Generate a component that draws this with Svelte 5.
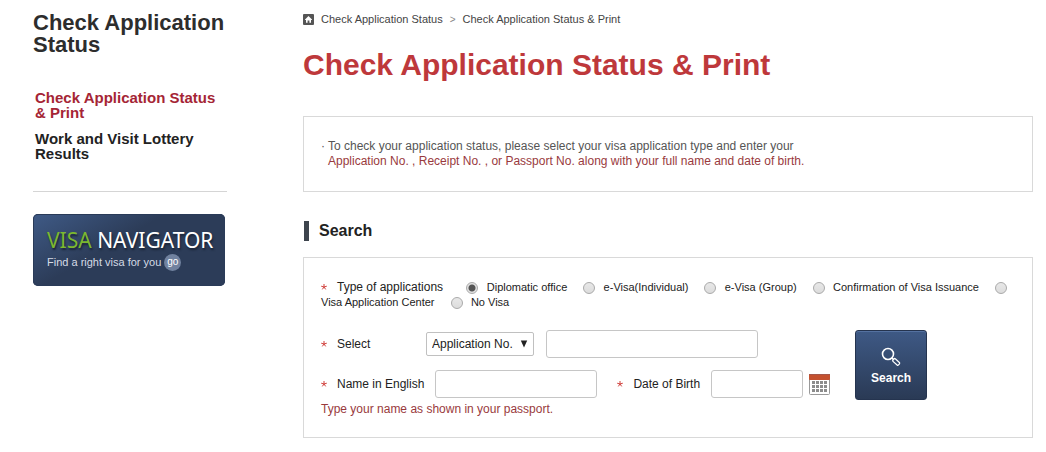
<script lang="ts">
const types = [
    { id: 'diplomatic', label: 'Diplomatic office' },
    { id: 'individual', label: 'e-Visa(Individual)' },
    { id: 'group', label: 'e-Visa (Group)' },
    { id: 'issuance', label: 'Confirmation of Visa Issuance' },
    { id: 'center', label: 'Visa Application Center' },
    { id: 'novisa', label: 'No Visa' }
]

let visaType = $state('diplomatic')
let searchBy = $state('Application No.')
let number = $state('')
let name = $state('')
let birth = $state('')

function onsubmit(e: SubmitEvent) {
    e.preventDefault()
}
</script>

{#snippet star()}
    <svg class="star" width="6" height="6" viewBox="0 0 6 6" role="img" aria-label="required">
        <path d="M3 0 V3 M0.2 2.2 L3 3 L5.8 2.2 M1.3 5.4 L3 3 L4.7 5.4" fill="none" stroke="#d0413d" />
    </svg>
{/snippet}

<div class="page">
    <aside>
        <h2>Check Application Status</h2>
        <nav>
            <a class="current" href="#status">Check Application Status &amp; Print</a>
            <a href="#lottery">Work and Visit Lottery Results</a>
        </nav>
        <a class="banner" href="#navigator">
            <span class="banner-title"><em>VISA</em> NAVIGATOR</span>
            <span class="banner-text">Find a right visa for you <span class="go">go</span></span>
        </a>
    </aside>

    <main>
        <div class="breadcrumb">
            <a href="#home" aria-label="Home">
                <svg width="11" height="11" viewBox="0 0 11 11">
                    <rect width="11" height="11" rx="1" fill="#555" />
                    <path d="M5.5 2 L9 5.4 V6 H8 V8.8 H6.4 V6.6 H4.6 V8.8 H3 V6 H2 V5.4 Z" fill="#fff" />
                </svg>
            </a>
            <a href="#status">Check Application Status</a>
            <span class="sep">&gt;</span>
            <span>Check Application Status &amp; Print</span>
        </div>
        <h1>Check Application Status &amp; Print</h1>

        <div class="box info">
            <span class="dot">·</span>
            <p>
                To check your application status, please select your visa application type and enter your<br />
                <span class="red">Application No. , Receipt No. , or Passport No. along with your full name and date of birth.</span>
            </p>
        </div>

        <h3>Search</h3>

        <form class="box" {onsubmit}>
            <div class="types" role="radiogroup" aria-labelledby="types-label">
                {@render star()}<span class="types-label" id="types-label">Type of applications</span>
                {#each types as type}
                    <input type="radio" id={type.id} value={type.id} bind:group={visaType} />
                    <label for={type.id}>{type.label}</label>
                {/each}
            </div>

            <div class="fields">
                <div class="rows">
                    <div class="row">
                        {@render star()}
                        <label class="select-label" for="search-by">Select</label>
                        <div class="select">
                            <select id="search-by" bind:value={searchBy}>
                                <option>Application No.</option>
                                <option>Receipt No.</option>
                                <option>Passport No.</option>
                            </select>
                            <svg width="8" height="8" viewBox="0 0 8 8"><path d="M0.8 0.5 H7.2 L4 7.5 Z" fill="#222" /></svg>
                        </div>
                        <input class="number" type="text" aria-label="Number" bind:value={number} />
                    </div>
                    <div class="row">
                        {@render star()}
                        <label for="name">Name in English</label>
                        <input class="name" id="name" type="text" bind:value={name} />
                        <span class="second">{@render star()}</span>
                        <label for="birth">Date of Birth</label>
                        <input class="birth" id="birth" type="text" bind:value={birth} />
                        <button class="calendar" type="button" aria-label="Open calendar">
                            <svg width="21" height="21" viewBox="0 0 21 21">
                                <rect x="0.5" y="0.5" width="20" height="20" rx="1" fill="#fff" stroke="#999" />
                                <rect x="0" y="0" width="21" height="6" rx="1" fill="#c4512f" />
                                <rect x="0" y="0" width="21" height="1" fill="#a5574a" />
                                {#each [7, 11, 15] as y}
                                    {#each [3, 7, 11, 15] as x}
                                        <rect {x} {y} width="3" height="3" fill="#8c8c8c" />
                                    {/each}
                                {/each}
                            </svg>
                        </button>
                    </div>
                </div>
                <button class="search" type="submit">
                    <svg width="20" height="20" viewBox="0 0 20 20" fill="none" stroke="#fff">
                        <circle cx="7" cy="7" r="5.5" stroke-width="1.6" />
                        <path d="M10.8 10.8 L13 13" stroke-width="1.6" />
                        <rect x="0" y="-1.7" width="7.5" height="3.4" rx="1" transform="translate(12.4 12.4) rotate(42)" stroke-width="1.2" />
                    </svg>
                    Search
                </button>
            </div>
            <p class="hint">Type your name as shown in your passport.</p>
        </form>
    </main>
</div>

<style>
    :global(body) {
        background: #fff;
    }
    .page {
        display: flex;
        gap: 76px;
        padding: 12px 13px 14px 33px;
        font-family: Arial, "Liberation Sans", sans-serif;
        font-size: 12px;
        line-height: 15px;
        color: #222;
    }
    a {
        color: inherit;
        text-decoration: none;
    }
    h1, h2, h3, p {
        margin: 0;
    }
    aside {
        flex: 0 0 194px;
    }
    main {
        flex: 1;
    }
    h2 {
        font-size: 22px;
        line-height: 22px;
        color: #2d2d2d;
    }
    nav {
        display: flex;
        flex-direction: column;
        gap: 11px;
        margin-top: 34px;
        padding: 0 0 30px 2px;
        border-bottom: 1px solid #d5d5d5;
        font-size: 15px;
        font-weight: bold;
    }
    .current {
        color: #a52535;
    }
    .banner {
        display: flex;
        flex-direction: column;
        box-sizing: border-box;
        width: 192px;
        height: 72px;
        margin-top: 22px;
        padding: 13px 0 0 14px;
        border-radius: 5px;
        background: linear-gradient(150deg, #3f5a86 0%, #2c3c58 42%);
        box-shadow: inset 0 0 0 1px #2a3b58;
        color: #fff;
    }
    .banner-title {
        font-family: "Noto Sans", "Open Sans", sans-serif;
        font-size: 21px;
        line-height: 26px;
        text-shadow: 1px 2px 2px #1a2436;
        white-space: nowrap;
    }
    em {
        font-style: normal;
        color: #7cb82f;
    }
    .banner-text {
        display: flex;
        align-items: center;
        gap: 3px;
        font-size: 11px;
        line-height: 18px;
        color: #d5dbe6;
    }
    .go {
        width: 17px;
        height: 17px;
        border-radius: 50%;
        background: #71829f;
        font-size: 10px;
        line-height: 15px;
        text-align: center;
        color: #fff;
    }
    .breadcrumb {
        display: flex;
        align-items: center;
        gap: 7px;
        font-size: 11px;
        color: #444;
    }
    .breadcrumb svg {
        display: block;
    }
    .sep {
        font-size: 10px;
        color: #888;
    }
    h1 {
        margin-top: 20px;
        font-size: 30px;
        line-height: 36px;
        color: #be383b;
    }
    .box {
        border: 1px solid #d9d9d9;
        padding: 22px 13px 20px 17px;
    }
    .info {
        display: flex;
        gap: 3px;
        margin-top: 33px;
        padding-bottom: 22px;
        color: #555;
    }
    .red, .hint {
        color: #993a3d;
    }
    h3 {
        margin: 29px 0 16px 1px;
        padding-left: 10px;
        border-left: 5px solid #3d444d;
        font-size: 16px;
        line-height: 20px;
    }
    .star {
        flex: none;
        margin: 0 10px 1px 0;
    }
    .types label {
        margin-right: 16px;
        font-size: 11px;
    }
    .types-label {
        margin-right: 20px;
    }
    input, select, button {
        box-sizing: border-box;
        margin: 0;
        font: inherit;
    }
    input[type="radio"] {
        appearance: none;
        width: 12px;
        height: 12px;
        margin-right: 5px;
        border: 1px solid #aaa;
        border-radius: 50%;
        background: linear-gradient(#e8e8e8, #dcdcdc);
        vertical-align: -3px;
    }
    input[type="radio"]:checked {
        background: radial-gradient(circle, #555 0 3px, #e2e2e2 4px);
    }
    .fields {
        display: flex;
        gap: 25px;
        margin-top: 20px;
    }
    .rows {
        display: flex;
        flex-direction: column;
        gap: 12px;
    }
    .row {
        display: flex;
        align-items: center;
        white-space: nowrap;
    }
    .select-label {
        width: 77px;
    }
    input[type="text"] {
        height: 28px;
        margin-left: 11px;
        padding: 0 6px;
        border: 1px solid #c6c6c6;
        border-radius: 3px;
        background: #fff;
    }
    .select {
        display: flex;
        align-items: center;
        margin-left: 12px;
    }
    select {
        appearance: none;
        width: 108px;
        height: 24px;
        padding: 0 5px;
        border: 1px solid #c0c0c0;
        border-radius: 2px;
        background: #fff;
        color: #222;
    }
    .select svg {
        margin-left: -14px;
        margin-right: 7px;
        pointer-events: none;
    }
    .number {
        width: 212px;
    }
    .name {
        width: 162px;
    }
    .birth {
        width: 92px;
    }
    .second {
        display: flex;
        margin-left: 20px;
    }
    .calendar {
        margin-left: 6px;
        padding: 0;
        border: 0;
        background: none;
    }
    .calendar svg {
        display: block;
    }
    .search {
        display: flex;
        flex-direction: column;
        align-items: center;
        gap: 4px;
        width: 72px;
        height: 70px;
        padding: 16px 0 0;
        border: 1px solid #25344f;
        border-radius: 3px;
        background: linear-gradient(#3e5985, #2a3a55);
        box-shadow: inset 0 1px 0 #5471a0;
        font-weight: bold;
        color: #fff;
    }
    .hint {
        margin-top: 2px;
    }
</style>
